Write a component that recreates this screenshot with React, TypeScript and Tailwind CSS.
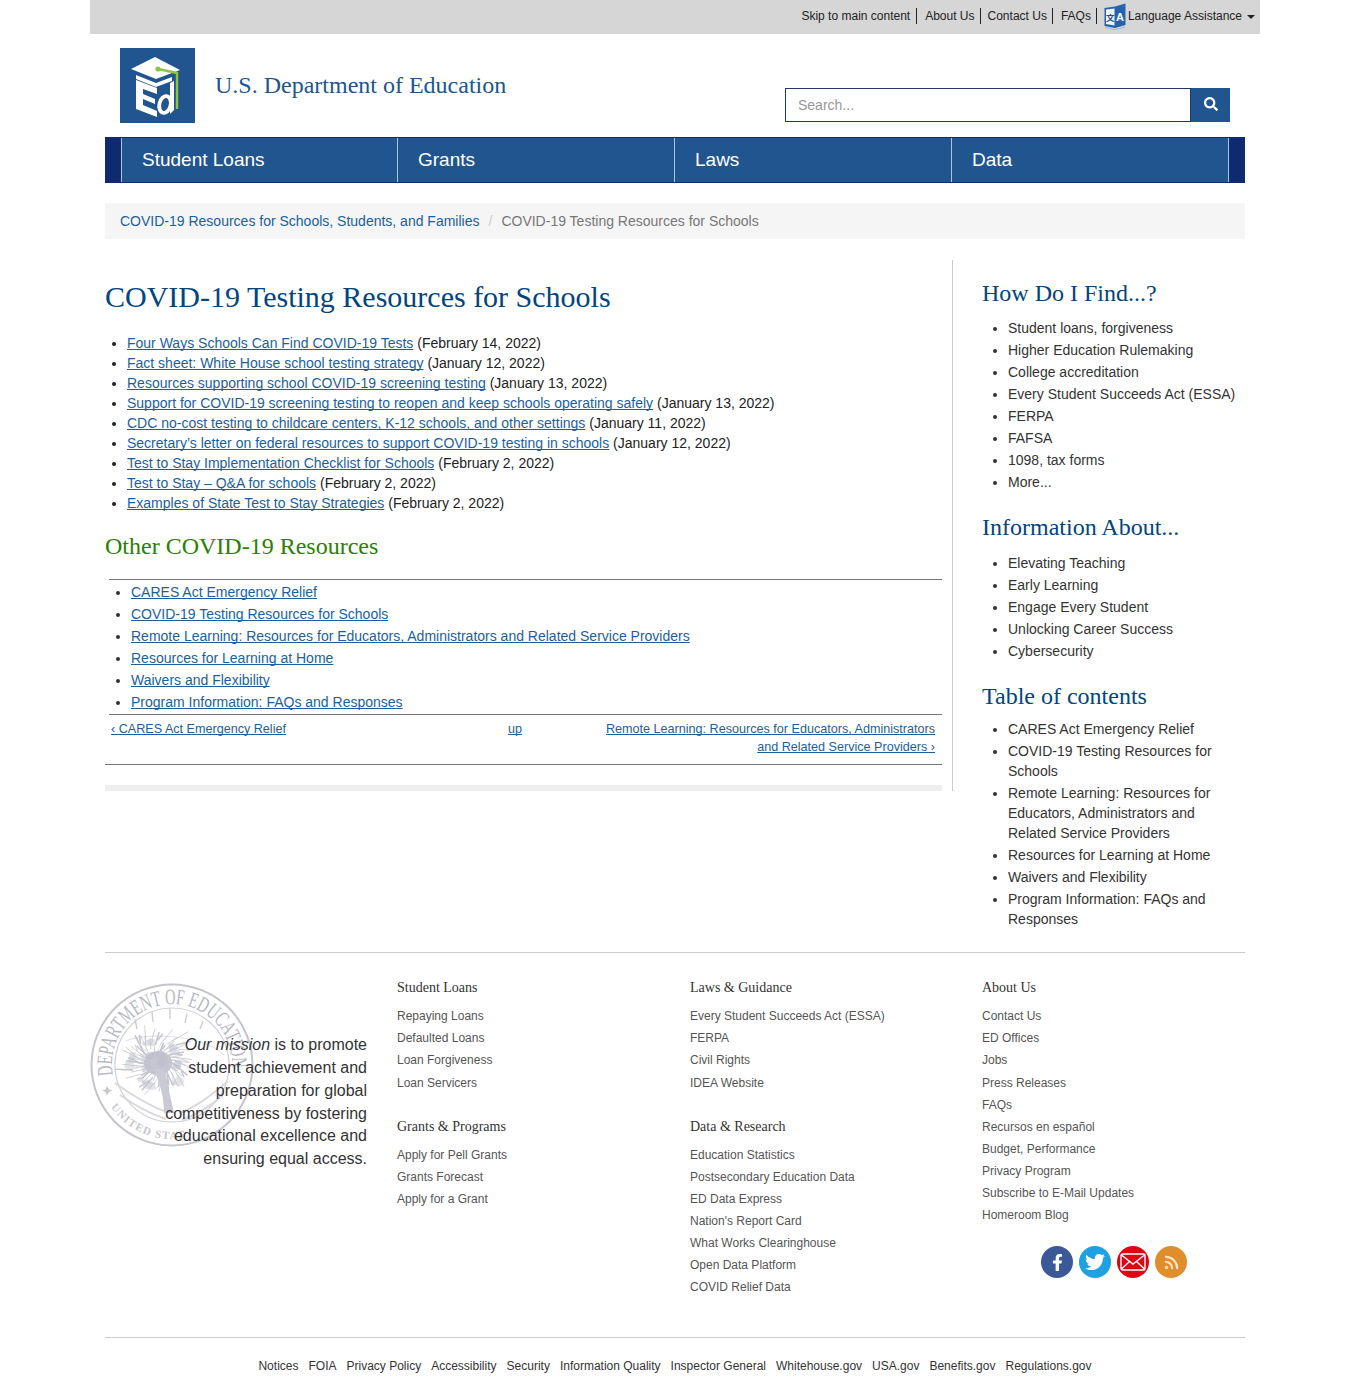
import { Rss } from 'lucide-react';
import { FaFacebookF, FaSearch, FaTwitter } from 'react-icons/fa';

const sans = "font-['Liberation_Sans',Arial,sans-serif]";
const link = 'underline [text-decoration-skip-ink:none] text-[#1b5f9f]';

const mainLinks = [
  ['Four Ways Schools Can Find COVID-19 Tests', '(February 14, 2022)'],
  ['Fact sheet: White House school testing strategy', '(January 12, 2022)'],
  ['Resources supporting school COVID-19 screening testing', '(January 13, 2022)'],
  ['Support for COVID-19 screening testing to reopen and keep schools operating safely', '(January 13, 2022)'],
  ['CDC no-cost testing to childcare centers, K-12 schools, and other settings', '(January 11, 2022)'],
  ['Secretary’s letter on federal resources to support COVID-19 testing in schools', '(January 12, 2022)'],
  ['Test to Stay Implementation Checklist for Schools', '(February 2, 2022)'],
  ['Test to Stay – Q&A for schools', '(February 2, 2022)'],
  ['Examples of State Test to Stay Strategies', '(February 2, 2022)'],
];

const otherLinks = [
  'CARES Act Emergency Relief',
  'COVID-19 Testing Resources for Schools',
  'Remote Learning: Resources for Educators, Administrators and Related Service Providers',
  'Resources for Learning at Home',
  'Waivers and Flexibility',
  'Program Information: FAQs and Responses',
];

const sidebar = [
  {
    title: 'How Do I Find...?',
    top: 'mt-[20px]',
    gap: 'mb-[12px]',
    items: ['Student loans, forgiveness', 'Higher Education Rulemaking', 'College accreditation', 'Every Student Succeeds Act (ESSA)', 'FERPA', 'FAFSA', '1098, tax forms', 'More...'],
  },
  {
    title: 'Information About...',
    top: 'mt-[22px]',
    gap: 'mb-[13px]',
    items: ['Elevating Teaching', 'Early Learning', 'Engage Every Student', 'Unlocking Career Success', 'Cybersecurity'],
  },
  {
    title: 'Table of contents',
    top: 'mt-[22px]',
    gap: 'mb-[10px]',
    items: otherLinks,
  },
];

const bottomLinks = ['Notices', 'FOIA', 'Privacy Policy', 'Accessibility', 'Security', 'Information Quality', 'Inspector General', 'Whitehouse.gov', 'USA.gov', 'Benefits.gov', 'Regulations.gov'];

function EdLogo() {
  return (
    <svg viewBox="0 0 75 75" className="w-[75px] h-[75px] shrink-0">
      <rect width="75" height="75" fill="#20558f" />
      {/* cap */}
      <path d="M11 21 L35 9 L60 22 L36 31 Z" fill="#fff" />
      <path d="M16 27 L36 35 L52 29 L52 33 L36 39 L16 31 Z" fill="#fff" />
      {/* E */}
      <path d="M16 32 L37 40 L37 46 L23 41 L23 46 L35 51 L35 56 L23 51 L23 57 L37 63 L37 69 L16 61 Z" fill="#fff" />
      {/* d */}
      <path d="M50 35 L54 33 L54 62 L50 66 Z" fill="#fff" />
      <ellipse cx="45" cy="56.5" rx="5.6" ry="8.5" fill="none" stroke="#fff" strokeWidth="3.8" transform="rotate(14 45 56.5)" />
      {/* tassel */}
      <path d="M38 21 L57 25 L57 61" fill="none" stroke="#8cc63f" strokeWidth="2.4" />
      <circle cx="38" cy="21" r="2.6" fill="#8cc63f" />
    </svg>
  );
}

function LanguageIcon() {
  return (
    <svg viewBox="0 0 22 27" className="w-[22px] h-[27px] shrink-0">
      <path d="M0.5 5 L11 3.5 L21.5 0.5 L21.5 22 L11 25 L0.5 23 Z" fill="#2564ad" />
      <path d="M2 6.5 L10.5 5.5 L10.5 22.5 L2 21 Z" fill="#eef3f9" />
      <path d="M1 24.5 L11 26.5 L21 24" fill="none" stroke="#9dbfe0" strokeWidth="1.2" />
      <text x="16" y="18" textAnchor="middle" fontSize="11" fontWeight="700" fill="#fff" fontFamily="Liberation Sans">A</text>
      <text x="6.2" y="18" textAnchor="middle" fontSize="8.5" fontWeight="700" fill="#1b4f8f" fontFamily="Noto Sans CJK SC">文</text>
    </svg>
  );
}

function Seal() {
  // tree crown: irregular twigs and blotches, fixed pseudo-random values
  const twigs = Array.from({ length: 90 }, (_, i) => {
    const a = (i * 2.399) % (Math.PI * 2);
    const r1 = 6 + ((i * 17) % 22);
    const r2 = r1 + 6 + ((i * 23) % 14);
    const x1 = 68 + Math.cos(a) * r1;
    const y1 = 78 + Math.sin(a) * r1 * 0.85;
    const x2 = 68 + Math.cos(a + 0.18) * r2;
    const y2 = 78 + Math.sin(a + 0.18) * r2 * 0.85;
    return `M${x1.toFixed(1)} ${y1.toFixed(1)} L${x2.toFixed(1)} ${y2.toFixed(1)}`;
  });
  const blotches = Array.from({ length: 40 }, (_, i) => {
    const a = (i * 1.7) % (Math.PI * 2);
    const r = 4 + ((i * 11) % 30);
    return { cx: 68 + Math.cos(a) * r, cy: 78 + Math.sin(a) * r * 0.8, r: 2 + (i % 4) };
  });
  const ticks = [
    [45, 36, 47, 46],
    [62, 29, 63, 39],
    [80, 26, 80, 36],
    [97, 31, 95, 40],
    [113, 38, 110, 46],
  ];
  return (
    <svg viewBox="0 0 164 164" className="absolute left-0 top-0 w-[164px] h-[164px]">
      <defs>
        <path id="seal-top" d="M23 92 A60 60 0 1 1 141 92" />
        <path id="seal-bottom" d="M21 124 A74 74 0 0 0 100 154" />
      </defs>
      <circle cx="82" cy="82" r="80.5" fill="none" stroke="#c4c4cc" strokeWidth="2" />
      <circle cx="82" cy="82" r="57" fill="none" stroke="#cfcfd6" strokeWidth="1.2" />
      <text fontSize="22" fill="#b6b6c2" fontFamily="Liberation Serif">
        <textPath href="#seal-top" textLength="203" lengthAdjust="spacingAndGlyphs">DEPARTMENT OF EDUCATION</textPath>
      </text>
      <text fontSize="11" fontWeight="700" fill="#c6c6ce" fontFamily="Liberation Serif" letterSpacing="1.2">
        <textPath href="#seal-bottom">UNITED STATES</textPath>
      </text>
      <path d="M17 103 l2 3.5 l3.5 1 l-3.5 1.5 l-2 3.5 l-1.5 -3.5 l-3.5 -1.5 l3.5 -1 Z" fill="#c6c6ce" />
      {ticks.map(([x1, y1, x2, y2], i) => (
        <line key={i} x1={x1} y1={y1} x2={x2} y2={y2} stroke="#cdcdd5" strokeWidth="1.4" />
      ))}
      {/* ground bands */}
      <path d="M25 100 C42 112 58 122 74 128 M30 112 C44 122 58 130 76 136 M90 130 C106 124 122 112 138 98 M92 137 C108 131 124 120 133 112" fill="none" stroke="#d8d8de" strokeWidth="2" />
      <path d="M36 58 C52 50 110 50 134 72" fill="none" stroke="#e4e4e8" strokeWidth="1.2" />
      {/* tree */}
      {blotches.map((b, i) => (
        <circle key={i} cx={b.cx} cy={b.cy} r={b.r} fill="#d2d2dc" opacity="0.6" />
      ))}
      <ellipse cx="68" cy="80" rx="14" ry="12" fill="#bcbcca" opacity="0.85" />
      {twigs.map((d, i) => (
        <path key={i} d={d} fill="none" stroke="#c4c4d0" strokeWidth={i % 3 === 0 ? 1.5 : 0.8} />
      ))}
      <path d="M64 86 C70 100 74 114 74 130 L84 130 C80 114 78 100 74 86 Z" fill="#cacad5" />
    </svg>
  );
}

function FooterColumn({ title, links, className }: { title: string; links: string[]; className?: string }) {
  return (
    <div className={className}>
      <h3 className="font-['Liberation_Serif',serif] text-[14px] leading-[16px] text-[#333] mb-[9px]">{title}</h3>
      <ul className="flex flex-col">
        {links.map((item) => (
          <li key={item} className="h-[22.1px] text-[12px] leading-[22px] text-[#555]">{item}</li>
        ))}
      </ul>
    </div>
  );
}

export default function App() {
  return (
    <div className={`${sans} bg-white w-[1350px] h-[1385px] overflow-hidden text-[14px] text-[#333]`}>
      {/* Top utility bar */}
      <div className="mx-[90px] h-[34px] bg-[#d6d6d6] flex items-center justify-end pr-[5px] pb-[2px] text-[12px] text-[#222]">
        <span className="pr-[6px] border-r border-[#222] leading-[16px]">Skip to main content</span>
        <span className="pl-[8px] pr-[5px] border-r border-[#222] leading-[16px]">About Us</span>
        <span className="pl-[7px] pr-[5px] border-r border-[#222] leading-[16px]">Contact Us</span>
        <span className="pl-[8px] pr-[5px] border-r border-[#222] leading-[16px]">FAQs</span>
        <span className="flex items-center ml-[7px] mr-[2px] mt-[1px]"><LanguageIcon /></span>
        <span>Language Assistance</span>
        <span className="ml-[5px] mt-[2px] w-0 h-0 border-x-[4px] border-x-transparent border-t-[4px] border-t-[#222]" />
      </div>

      {/* Logo and search */}
      <div className="mx-[105px] h-[103px] relative flex">
        <div className="flex pl-[15px] pt-[14px]">
          <EdLogo />
          <div className="ml-[20px] mt-[20px] font-['Liberation_Serif',serif] text-[24px] leading-[34px] text-[#20558f]">U.S. Department of Education</div>
        </div>
        <div className="ml-auto mr-[15px] mt-[54px] flex h-[34px]">
          <div className="w-[406px] border border-[#20376b] pl-[12px] text-[14px] leading-[32px] text-[#999]">Search...</div>
          <div className="w-[39px] bg-[#20558f] flex items-center justify-center pb-[2px]">
            <FaSearch className="w-[14px] h-[14px] text-white" />
          </div>
        </div>
      </div>

      {/* Main nav */}
      <nav className="mx-[105px] h-[46px] bg-[#0f2a70] pl-[16px] border-y border-[#0f2a70] grid grid-cols-[276px_277px_277px_278px]">
        {['Student Loans', 'Grants', 'Laws', 'Data'].map((item) => (
          <div key={item} className="bg-[#20558f] border-l border-[#a9c6e6] last:border-r px-[20px] text-[19px] leading-[44px] text-white">
            {item}
          </div>
        ))}
      </nav>

      {/* Breadcrumb */}
      <div className="mx-[105px] mt-[20px] h-[36px] bg-[#f5f5f5] px-[15px] flex items-center">
        <a className="text-[#1b5f9f]">COVID-19 Resources for Schools, Students, and Families</a>
        <span className="px-[9px] text-[#ccc]">/</span>
        <span className="text-[#777]">COVID-19 Testing Resources for Schools</span>
      </div>

      {/* Content */}
      <div className="mx-[105px] mt-[21px] flex h-[692px] items-start">
        <main className="w-[848px] h-[531px] border-r border-[#ccc] pr-[10px]">
          <h1 className="mt-[20px] font-['Liberation_Serif',serif] text-[30px] leading-[33px] text-[#02457f]">COVID-19 Testing Resources for Schools</h1>
          <ul className="mt-[20px] pl-[22px] list-disc">
            {mainLinks.map(([label, date]) => (
              <li key={label} className="leading-[20px] text-[#222]">
                <a className={link}>{label}</a> {date}
              </li>
            ))}
          </ul>
          <h2 className="mt-[19px] font-['Liberation_Serif',serif] text-[24px] leading-[28px] text-[#2b8000]">Other COVID-19 Resources</h2>
          <div className="mt-[19px] ml-[4px] border-y border-[#777] pt-px pb-px">
            <ul className="pl-[22px] list-disc">
              {otherLinks.map((item) => (
                <li key={item} className="leading-[22px]">
                  <a className={link}>{item}</a>
                </li>
              ))}
            </ul>
          </div>
          <div className="border-b border-[#777] h-[50px] pl-[6px] pr-[7px] pt-[5px] grid grid-cols-[372px_64px_1fr] text-[12.6px] leading-[18px]">
            <a className={link}>‹ CARES Act Emergency Relief</a>
            <a className={`${link} text-center`}>up</a>
            <div className="pl-[48px] text-right">
              <a className={link}>Remote Learning: Resources for Educators, Administrators and Related Service Providers ›</a>
            </div>
          </div>
          <div className="mt-[20px] h-[6px] bg-[#eee]" />
        </main>
        <aside className="ml-[29px] flex-1">
          {sidebar.map((section) => (
            <section key={section.title} className={section.top}>
              <h2 className={`font-['Liberation_Serif',serif] text-[24px] leading-[26px] text-[#02457f] ${section.gap}`}>{section.title}</h2>
              <ul className="pl-[26px] list-disc text-[#333]">
                {section.items.map((item) => (
                  <li key={item} className="leading-[20px] mb-[2px]">{item}</li>
                ))}
              </ul>
            </section>
          ))}
        </aside>
      </div>

      {/* Footer */}
      <footer className="mx-[105px] border-t border-[#ccc] h-[385px] flex relative">
        <div className="w-[292px] pr-[30px] relative shrink-0">
          <div className="absolute -left-[15px] top-[30px]"><Seal /></div>
          <p className="relative ml-auto w-[215px] mt-[81px] text-right text-[16px] leading-[22.85px] text-[#333]"><em>Our mission</em> is to promote student achievement and preparation for global competitiveness by fostering educational excellence and ensuring equal access.</p>
        </div>
        <div className="w-[293px] pt-[27.25px] shrink-0">
          <FooterColumn title="Student Loans" links={['Repaying Loans', 'Defaulted Loans', 'Loan Forgiveness', 'Loan Servicers']} />
          <FooterColumn className="mt-[25.3px]" title="Grants & Programs" links={['Apply for Pell Grants', 'Grants Forecast', 'Apply for a Grant']} />
        </div>
        <div className="w-[292px] pt-[27.25px] shrink-0">
          <FooterColumn title="Laws & Guidance" links={['Every Student Succeeds Act (ESSA)', 'FERPA', 'Civil Rights', 'IDEA Website']} />
          <FooterColumn className="mt-[25.3px]" title="Data & Research" links={['Education Statistics', 'Postsecondary Education Data', 'ED Data Express', "Nation's Report Card", 'What Works Clearinghouse', 'Open Data Platform', 'COVID Relief Data']} />
        </div>
        <div className="flex-1 pt-[27.25px]">
          <FooterColumn title="About Us" links={['Contact Us', 'ED Offices', 'Jobs', 'Press Releases', 'FAQs', 'Recursos en español', 'Budget, Performance', 'Privacy Program', 'Subscribe to E-Mail Updates', 'Homeroom Blog']} />
          <div className="mt-[20px] ml-[59px] flex gap-[6px]">
            <span className="w-[32px] h-[32px] rounded-full bg-[#3b5998] flex items-center justify-center"><FaFacebookF className="w-[17px] h-[17px] text-white" /></span>
            <span className="w-[32px] h-[32px] rounded-full bg-[#1da1e2] flex items-center justify-center"><FaTwitter className="w-[20px] h-[20px] text-white" /></span>
            <span className="w-[32px] h-[32px] rounded-full bg-[#e3000f] flex items-center justify-center">
              <svg viewBox="0 0 26 18" className="w-[26px] h-[18px]" fill="none" stroke="#fff" strokeWidth="1.4">
                <rect x="1" y="1" width="24" height="16" rx="1.5" />
                <path d="M1.5 2 L13 11 L24.5 2 M1.5 16 L9.5 8.5 M24.5 16 L16.5 8.5" />
              </svg>
            </span>
            <span className="w-[32px] h-[32px] rounded-full bg-[#e08e2b] flex items-center justify-center"><Rss className="w-[17px] h-[17px] text-[#fbe3c2]" strokeWidth={3} /></span>
          </div>
        </div>
        <div className="absolute left-0 right-0 top-[384px] border-t border-[#ccc] h-[48px] pt-[8px] flex items-center justify-center gap-[10px] text-[12px] text-[#333]">
          {bottomLinks.map((item) => (
            <span key={item}>{item}</span>
          ))}
        </div>
      </footer>
    </div>
  );
}
